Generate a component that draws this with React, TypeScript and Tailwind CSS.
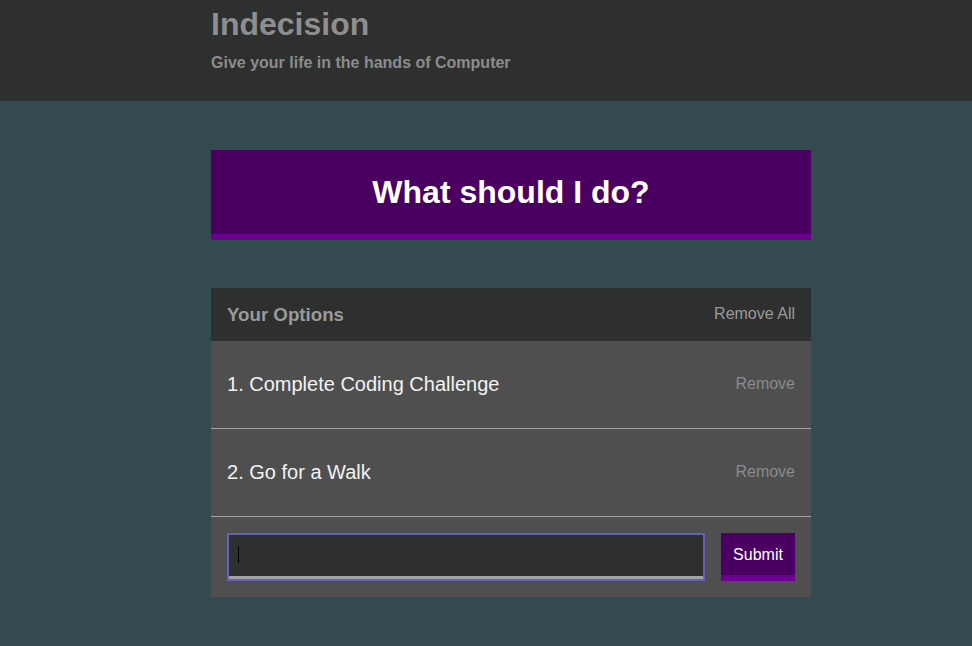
import React, { useState } from 'react';

const App: React.FC = () => {
  const [options, setOptions] = useState<string[]>(['Complete Coding Challenge', 'Go for a Walk']);
  const [text, setText] = useState('');

  const handleAdd = (e: React.FormEvent) => {
    e.preventDefault();
    const v = text.trim();
    if (!v) return;
    setOptions(prev => [...prev, v]);
    setText('');
  };

  return (
    <div className="min-h-[646px] bg-[#334a4f] font-['Liberation_Sans',Arial,sans-serif]">
      {/* Header */}
      <header className="h-[101px] bg-[#2e2f2f] pt-2">
        <div className="ml-[211px] w-[600px]">
          <h1 className="text-[32px] leading-8 font-bold text-[#8e8e8e]">Indecision</h1>
          <h2 className="mt-[14px] text-base leading-[18px] font-bold text-[#8c8c8c]">Give your life in the hands of Computer</h2>
        </div>
      </header>

      <div className="ml-[211px] w-[600px] pt-[49px] pb-12">
        <button
          className="w-full h-[90px] bg-[#4a0060] border-b-[6px] border-[#6b0091] text-white text-[32px] font-bold"
          disabled={options.length === 0}
        >What should I do?</button>

        {/* Options widget */}
        <div className="mt-12 bg-[#4f4f4f]">
          <div className="h-[53px] bg-[#2e2f2f] flex items-center justify-between px-4">
            <h3 className="text-[18.7px] font-bold text-[#9a9a9a] mt-0.5">Your Options</h3>
            <button className="text-base text-[#9a9a9a] -mt-0.5" onClick={() => setOptions([])}>Remove All</button>
          </div>

          {options.map((opt, i) => (
            <div key={i} className="h-[88px] border-b border-[#a3a3a3] flex items-center justify-between px-4">
              <p className="text-[20px] text-[#f2f2f2] -mt-0.5">{i + 1}. {opt}</p>
              <button
                className="text-base text-[#8a8a8a] -mt-0.5"
                onClick={() => setOptions(prev => prev.filter((_, j) => j !== i))}
              >Remove</button>
            </div>
          ))}

          <form className="flex gap-4 p-4" onSubmit={handleAdd}>
            <div className="relative flex-1">
              <input
                value={text}
                onChange={e => setText(e.target.value)}
                className="w-full h-12 bg-[#2e2f2f] border-2 border-[#6560bd] outline-none shadow-[inset_0_-3px_0_#a3a3a3] px-2.5 text-white caret-black"
              />
              {text === '' && (
                <span className="absolute left-[11px] top-[13px] w-px h-[17px] bg-black pointer-events-none" />
              )}
            </div>
            <button className="w-[74px] h-12 bg-[#4a0060] border-b-[6px] border-[#6b0091] text-white text-base pt-[2px]">Submit</button>
          </form>
        </div>
      </div>
    </div>
  );
};

export default App;
